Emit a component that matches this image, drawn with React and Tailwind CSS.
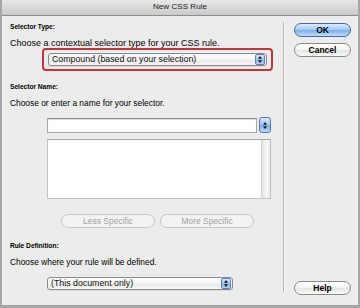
import React from 'react';

const font = "font-['Liberation_Sans',Arial,sans-serif]";

function Arrows({ className = '' }) {
  return (
    <svg width="4" height="7" viewBox="0 0 5 9" className={className}>
      <polygon points="2.5,0 5,3.5 0,3.5" fill="#111" />
      <polygon points="0,5.5 5,5.5 2.5,9" fill="#111" />
    </svg>
  );
}

function Select({ label, className = '' }) {
  return (
    <div
      className={`flex items-center h-[13px] rounded-[3px] border border-[#8c8c8c] bg-[linear-gradient(to_bottom,#ffffff,#f3f3f3_50%,#e6e6e6_51%,#f7f7f7)] shadow-[0_1px_0_rgba(0,0,0,0.08)] ${className}`}
    >
      <span className="pl-[3px] text-[8.8px] leading-[11px] text-[#111] whitespace-nowrap">{label}</span>
      <div className="ml-auto mr-[1px] w-[10px] h-[11px] rounded-[2px] border border-[#5f80b6] bg-[linear-gradient(to_bottom,#d7e8fb,#9cc4f2_50%,#79acec_51%,#b5d7fa)] flex items-center justify-center">
        <Arrows />
      </div>
    </div>
  );
}

function AquaButton({ children, primary, disabled, className = '' }) {
  let look =
    'border-[#8a8a8a] text-black bg-[linear-gradient(to_bottom,#ffffff,#f4f4f4_50%,#e4e4e4_51%,#fafafa)]';
  if (primary)
    look =
      'border-[#4a6899] text-black bg-[linear-gradient(to_bottom,#dcebfc,#a2c7f2_50%,#77aeec_51%,#bfe0fc)]';
  if (disabled)
    look = 'border-[#c6c6c6] text-[#a2a2a2] font-normal bg-[#f3f3f3]';
  return (
    <button
      type="button"
      className={`h-[14px] rounded-full border flex items-center justify-center text-[8.5px] leading-[10px] ${
        disabled ? '' : 'font-bold'
      } ${look} ${className}`}
    >
      {children}
    </button>
  );
}

function Label({ children, className = '' }) {
  return <div className={`text-[6.6px] leading-[10px] font-bold ${className}`}>{children}</div>;
}

function Line({ children, className = '' }) {
  return <div className={`leading-[10px] whitespace-nowrap ${className}`}>{children}</div>;
}

export default function App() {
  return (
    <div
      className={`w-[360px] h-[308px] bg-[#ececec] flex flex-col border-l-2 border-r-2 border-b-[3px] border-[#a7a7a7] overflow-hidden text-black ${font}`}
    >
      {/* title bar */}
      <div className="h-[16px] shrink-0 flex items-center justify-center border-b border-[#8e8e8e] bg-[linear-gradient(to_bottom,#e8e8e8,#c9c9c9)] text-[8.1px] text-[#222]">
        New CSS Rule
      </div>

      <div className="flex flex-1">
        {/* left side */}
        <div className="w-[281px] pl-[8px] flex flex-col">
          <Label className="mt-[6px]">Selector Type:</Label>
          <Line className="mt-[6px] text-[9px]">Choose a contextual selector type for your CSS rule.</Line>
          <div className="ml-[32px] w-[231px] h-[23px] border-2 border-[#c2343a] rounded-[4px] px-[4px] flex items-center">
            <Select label="Compound (based on your selection)" className="w-full" />
          </div>

          <Label className="mt-[11px]">Selector Name:</Label>
          <Line className="mt-[6px] text-[8.4px]">Choose or enter a name for your selector.</Line>
          <div className="mt-[9px] ml-[37px] flex items-center gap-[2px]">
            <div className="w-[210px] h-[15px] bg-white border border-[#a8a8a8] border-t-[#8a8a8a] shadow-[inset_0_1px_1px_rgba(0,0,0,0.15)]" />
            <div className="w-[12px] h-[16px] rounded-[3px] border border-[#5a78ad] bg-[linear-gradient(to_bottom,#d9e9fc,#9fc6f3_50%,#78abec_51%,#b9d9fa)] flex items-center justify-center">
              <Arrows />
            </div>
          </div>
          <div className="mt-[6px] ml-[37px] w-[224px] h-[60px] bg-white border border-[#c2c2c2] border-t-[#a6a6a6] flex">
            <div className="flex-1" />
            <div className="w-[9px] h-full border-l border-[#d4d4d4] bg-[linear-gradient(to_right,#e4e4e4,#f8f8f8_60%,#ececec)]" />
          </div>

          <div className="mt-[15px] ml-[51px] flex gap-[5px]">
            <AquaButton disabled className="w-[94px]">Less Specific</AquaButton>
            <AquaButton disabled className="w-[94px]">More Specific</AquaButton>
          </div>

          <Label className="mt-[13px]">Rule Definition:</Label>
          <Line className="mt-[6px] text-[8.4px]">Choose where your rule will be defined.</Line>
          <Select label="(This document only)" className="mt-[10px] ml-[37px] w-[186px]" />
        </div>

        {/* divider */}
        <div className="mt-[6px] h-[270px] flex">
          <div className="w-px bg-[#b6b6b6]" />
          <div className="w-px bg-[#f9f9f9]" />
        </div>

        {/* right side */}
        <div className="flex-1 pl-[9px] pt-[7px] pb-[10px] flex flex-col">
          <AquaButton primary className="w-[57px]">OK</AquaButton>
          <AquaButton className="w-[57px] mt-[6px]">Cancel</AquaButton>
          <AquaButton className="w-[57px] mt-auto">Help</AquaButton>
        </div>
      </div>
    </div>
  );
}
